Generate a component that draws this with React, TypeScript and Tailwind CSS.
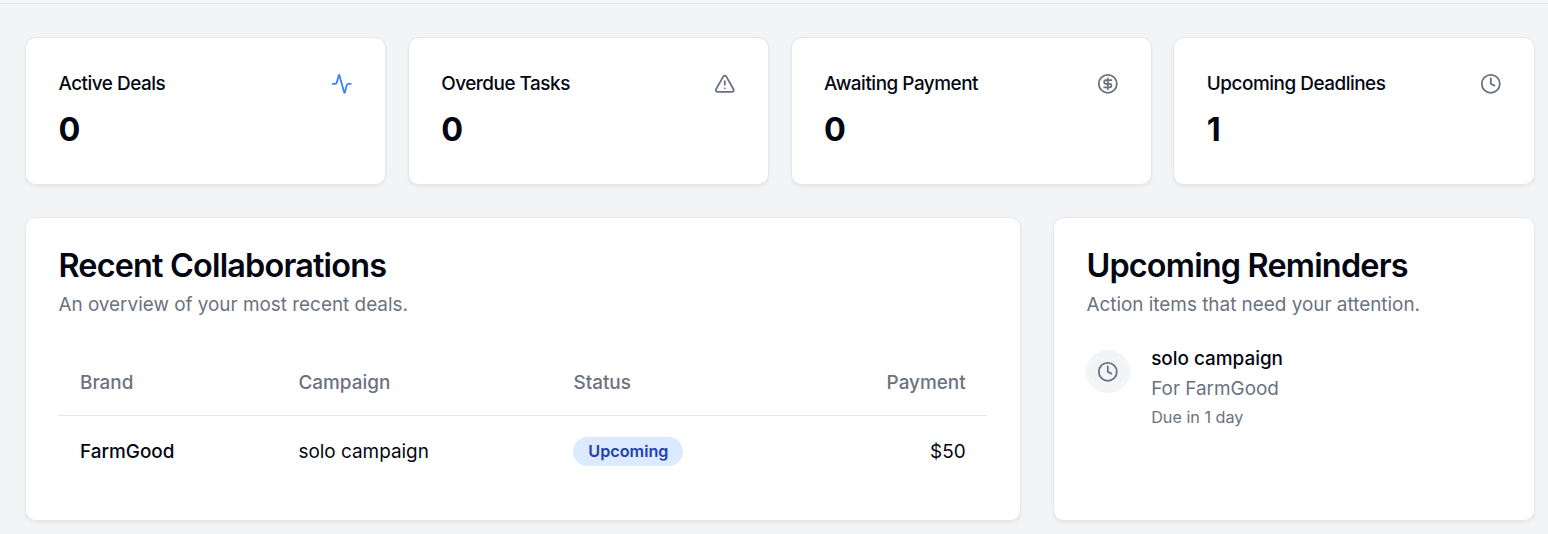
import type { ReactNode } from "react";
import { Activity, CircleDollarSign, Clock, TriangleAlert } from "lucide-react";

type Stat = { label: string; value: number; icon: ReactNode };

const iconClass = "size-[21.6px] text-[#6b7280]";

const stats: Stat[] = [
  { label: "Active Deals", value: 0, icon: <Activity className="size-[21.6px] text-[#3b82f6]" /> },
  { label: "Overdue Tasks", value: 0, icon: <TriangleAlert className={iconClass} /> },
  { label: "Awaiting Payment", value: 0, icon: <CircleDollarSign className={iconClass} /> },
  { label: "Upcoming Deadlines", value: 1, icon: <Clock className={iconClass} /> },
];

const cardClass = "rounded-[10.8px] border border-[#e5e7eb] bg-white shadow-[0_1.3px_2.7px_0_rgba(0,0,0,0.05)]";

function StatCard({ label, value, icon }: Stat) {
  return (
    <div className={`${cardClass} h-[147.8px] px-[32.4px] pt-[32px]`}>
      <div className="flex items-center justify-between pb-[10.8px]">
        <h3 className="text-[18.9px] leading-[27px] font-medium tracking-[-0.025em]">{label}</h3>
        {icon}
      </div>
      <div className="text-[32.4px] leading-[43px] font-bold">{value}</div>
    </div>
  );
}

function CardHeader({ title, description }: { title: string; description: string }) {
  return (
    <div className="flex flex-col gap-[8px] px-[32.4px] pt-[32px] pb-[32.2px]">
      <h2 className="text-[32.4px] leading-none font-semibold tracking-[-0.025em]">{title}</h2>
      <p className="text-[18.9px] leading-[27px] text-[#6b7280]">{description}</p>
    </div>
  );
}

export default function App() {
  return (
    <div className="h-[534px] overflow-hidden bg-[#f3f4f6] font-['Inter',sans-serif] text-[#030712]">
      <div className="h-1 border-b border-[#e5e7eb]" />
      <main className="flex flex-col gap-[32.4px] pt-[33.2px] pr-[13.3px] pl-[25px]">
        <section className="grid grid-cols-4 gap-[21.6px]">
          {stats.map((stat) => (
            <StatCard key={stat.label} {...stat} />
          ))}
        </section>
        <section className="grid grid-cols-[995.6px_minmax(0,1fr)] gap-[32.4px]">
          <div className={`${cardClass} h-[303.2px]`}>
            <CardHeader title="Recent Collaborations" description="An overview of your most recent deals." />
            <div className="px-[32.4px]">
              <table className="w-full table-fixed text-[18.9px] leading-[27px]">
                <colgroup>
                  <col className="w-[218.5px]" />
                  <col className="w-[275px]" />
                  <col className="w-[220px]" />
                  <col />
                </colgroup>
                <thead>
                  <tr className="h-[65.5px] border-b border-[#e5e7eb] text-left text-[#6b7280]">
                    <th className="px-[21.6px] font-medium">Brand</th>
                    <th className="px-[21.6px] font-medium">Campaign</th>
                    <th className="px-[21.6px] font-medium">Status</th>
                    <th className="px-[21.6px] text-right font-medium">Payment</th>
                  </tr>
                </thead>
                <tbody>
                  <tr className="h-[72px]">
                    <td className="px-[21.6px] font-medium">FarmGood</td>
                    <td className="px-[21.6px]">solo campaign</td>
                    <td className="px-[21.6px]">
                      <span className="flex h-[29px] w-fit items-center rounded-full bg-[#dbeafe] px-[14.8px] text-[16.2px] leading-[21.6px] font-semibold text-[#1e40af]">
                        Upcoming
                      </span>
                    </td>
                    <td className="px-[21.6px] text-right">$50</td>
                  </tr>
                </tbody>
              </table>
            </div>
          </div>
          <div className={cardClass}>
            <CardHeader title="Upcoming Reminders" description="Action items that need your attention." />
            <div className="flex items-start gap-[21.6px] px-[32.4px]">
              <span className="flex size-[43.2px] items-center justify-center rounded-full bg-[#f3f4f6]">
                <Clock className={iconClass} />
              </span>
              <div className="flex flex-col">
                <p className="text-[18.9px] leading-none font-medium">solo campaign</p>
                <p className="mt-[6.4px] text-[18.9px] leading-[27px] text-[#6b7280]">For FarmGood</p>
                <p className="mt-[4.8px] text-[16.2px] leading-[21.6px] text-[#6b7280]">Due in 1 day</p>
              </div>
            </div>
          </div>
        </section>
      </main>
    </div>
  );
}
